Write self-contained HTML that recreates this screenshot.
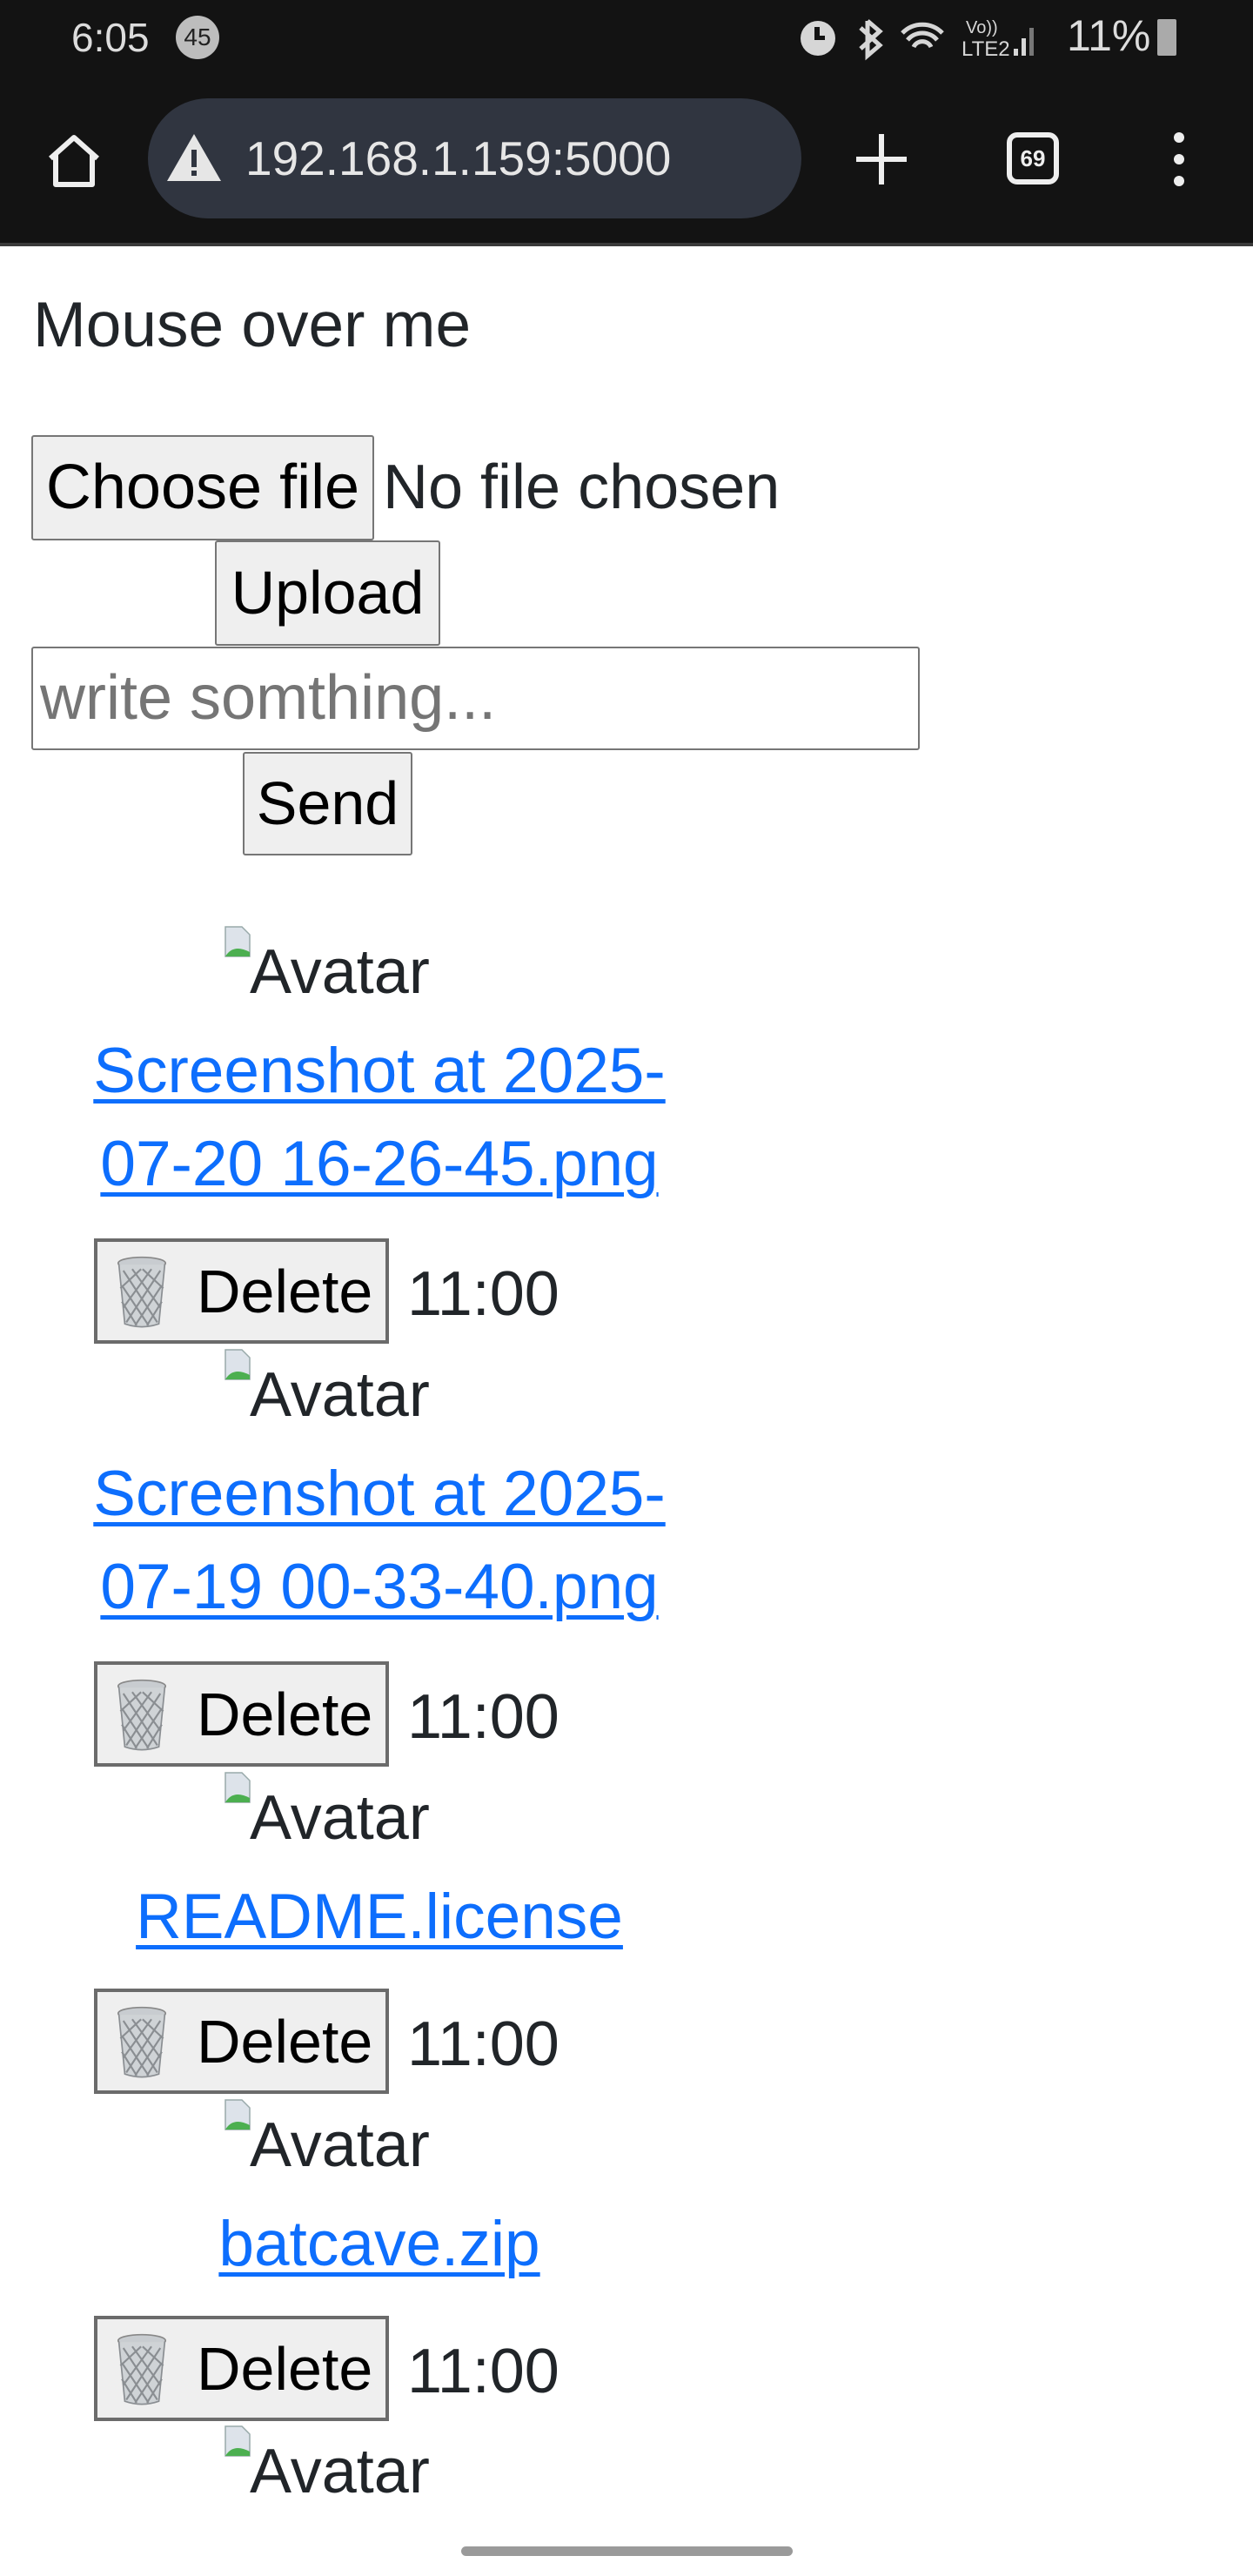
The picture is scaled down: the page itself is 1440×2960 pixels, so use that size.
<!DOCTYPE html>
<html><head><meta charset="utf-8"><style>
*{margin:0;padding:0;box-sizing:border-box}
body{width:1440px;height:2960px;background:#fff;position:relative;overflow:hidden;font-family:"Liberation Sans",sans-serif;color:#212529}
.a{position:absolute;white-space:nowrap}
.t{font-size:72px;line-height:107px}
.btn{position:absolute;background:#efefef;border:2px solid #767676;border-radius:3px;font-size:70px;color:#000;text-align:center}
.lnk{color:#0d6efd;text-decoration:underline;text-decoration-thickness:5px;text-underline-offset:8px;font-size:73px;line-height:107px;text-align:center;width:720px;left:76px}
.del{position:absolute;left:108px;width:339px;height:121px;background:#efefef;border:4px solid #6b6b6b}
.del span{position:absolute;left:114px;top:12px;font-size:70px;line-height:90px;color:#000}
.del svg{position:absolute;left:16px;top:16px}
</style></head><body>
<div class="a" style="left:0;top:0;width:1440px;height:279px;background:#131313"></div>
<div class="a" style="left:0;top:279px;width:1440px;height:4px;background:#3a3a3a"></div>
<div class="a" style="left:82px;top:16px;font-size:46px;color:#dcdcdc">6:05</div>
<div class="a" style="left:202px;top:18px;width:50px;height:50px;border-radius:25px;background:#bdbdbd;color:#222;font-size:28px;line-height:50px;text-align:center">45</div>
<svg class="a" style="left:905px;top:14px" width="310" height="60" viewBox="0 0 310 60" fill="#d6d6d6"><circle cx="35" cy="30" r="20"/><rect x="31" y="17" width="6" height="15" fill="#131313"/><rect x="31" y="27" width="12" height="5" fill="#131313"/><path d="M92 10 L106 22 L92 34 M92 10 V50 L106 38 L84 18 M84 42 L106 22" stroke="#d6d6d6" stroke-width="5" fill="none"/><path d="M132 24 a32 32 0 0 1 46 0 M138 32 a22 22 0 0 1 34 0 M145 40 a11 11 0 0 1 20 0" stroke="#d6d6d6" stroke-width="5" fill="none"/><text x="205" y="24" font-size="20" font-family="Liberation Sans">Vo))</text><text x="200" y="50" font-size="24" font-family="Liberation Sans">LTE2</text><rect x="260" y="42" width="5" height="8"/><rect x="269" y="30" width="5" height="20"/><rect x="278" y="18" width="5" height="32" fill="#777"/></svg>
<div class="a" style="left:1226px;top:12px;font-size:50px;color:#dcdcdc">11%</div>
<div class="a" style="left:1330px;top:22px;width:22px;height:42px;background:#aaa;border-radius:2px"></div>
<svg class="a" style="left:50px;top:150px" width="70" height="70" viewBox="0 0 70 70"><path d="M8 32 L35 8 L62 32 M14 27 V62 H56 V27" stroke="#eee" stroke-width="6" fill="none" stroke-linejoin="round"/></svg>
<div class="a" style="left:170px;top:113px;width:751px;height:138px;border-radius:69px;background:#303540"></div>
<svg class="a" style="left:190px;top:152px" width="66" height="58" viewBox="0 0 66 58"><path d="M33 2 L64 56 H2 Z" fill="#e6e6e6"/><rect x="30" y="20" width="6" height="20" fill="#303540"/><rect x="30" y="44" width="6" height="6" fill="#303540"/></svg>
<div class="a" style="left:282px;top:150px;font-size:55px;color:#e6e6e6">192.168.1.159:5000</div>
<svg class="a" style="left:980px;top:150px" width="66" height="66"><path d="M33 4 V62 M4 33 H62" stroke="#eee" stroke-width="6"/></svg>
<div class="a" style="left:1157px;top:152px;width:60px;height:60px;border:6px solid #eee;border-radius:12px;color:#eee;font-size:26px;font-weight:bold;text-align:center;line-height:48px">69</div>
<svg class="a" style="left:1340px;top:150px" width="30" height="66"><circle cx="15" cy="8" r="6" fill="#eee"/><circle cx="15" cy="33" r="6" fill="#eee"/><circle cx="15" cy="58" r="6" fill="#eee"/></svg>

<div class="a t" style="left:38px;top:320px;font-size:73px">Mouse over me</div>
<div class="btn" style="left:36px;top:500px;width:394px;height:121px;line-height:117px;font-size:72px">Choose file</div>
<div class="a" style="left:440px;top:510px;font-size:72px;line-height:100px">No file chosen</div>
<div class="btn" style="left:247px;top:621px;width:259px;height:121px;line-height:117px">Upload</div>
<div class="a" style="left:36px;top:743px;width:1021px;height:119px;border:2px solid #767676;border-radius:3px;font-size:72px;color:#757575;line-height:115px;padding-left:8px">write somthing...</div>
<div class="btn" style="left:279px;top:864px;width:195px;height:119px;line-height:115px">Send</div>

<svg width="0" height="0" style="position:absolute"><defs>
<symbol id="bi" viewBox="0 0 30 36"><path d="M1 1 H20 L29 10 V35 H1 Z" fill="#dde3ea" stroke="#9aa" stroke-width="1.5"/><path d="M1 35 Q10 20 29 30 V35 Z" fill="#4caf50"/></symbol>
<symbol id="tr" viewBox="0 0 70 100"><ellipse cx="35" cy="10" rx="32" ry="8" fill="#c8ccd0" stroke="#888" stroke-width="2"/><path d="M4 12 L12 92 Q35 100 58 92 L66 12" fill="#cfd3d6" stroke="#8a8e92" stroke-width="2"/><path d="M10 20 L56 90 M22 18 L60 70 M36 18 L64 44 M8 40 L44 94 M8 62 L28 94 M60 20 L14 90 M48 18 L10 70 M34 18 L6 44 M62 40 L26 94 M62 62 L42 94" stroke="#8a8e92" stroke-width="2.5"/></symbol>
</defs></svg>

<svg class="a" style="left:258px;top:1064px" width="30" height="36"><use href="#bi"/></svg>
<div class="a t" style="left:287px;top:1064px">Avatar</div>
<div class="a lnk" style="top:1177px">Screenshot at 2025-<br>07-20 16-26-45.png</div>
<div class="del" style="top:1423px"><svg width="70" height="85" viewBox="0 0 70 100"><use href="#tr"/></svg><span>Delete</span></div>
<div class="a t" style="left:468px;top:1434px">11:00</div>

<svg class="a" style="left:258px;top:1550px" width="30" height="36"><use href="#bi"/></svg>
<div class="a t" style="left:287px;top:1550px">Avatar</div>
<div class="a lnk" style="top:1663px">Screenshot at 2025-<br>07-19 00-33-40.png</div>
<div class="del" style="top:1909px"><svg width="70" height="85" viewBox="0 0 70 100"><use href="#tr"/></svg><span>Delete</span></div>
<div class="a t" style="left:468px;top:1920px">11:00</div>

<svg class="a" style="left:258px;top:2036px" width="30" height="36"><use href="#bi"/></svg>
<div class="a t" style="left:287px;top:2036px">Avatar</div>
<div class="a lnk" style="top:2149px">README.license</div>
<div class="del" style="top:2285px"><svg width="70" height="85" viewBox="0 0 70 100"><use href="#tr"/></svg><span>Delete</span></div>
<div class="a t" style="left:468px;top:2296px">11:00</div>

<svg class="a" style="left:258px;top:2412px" width="30" height="36"><use href="#bi"/></svg>
<div class="a t" style="left:287px;top:2412px">Avatar</div>
<div class="a lnk" style="top:2525px">batcave.zip</div>
<div class="del" style="top:2661px"><svg width="70" height="85" viewBox="0 0 70 100"><use href="#tr"/></svg><span>Delete</span></div>
<div class="a t" style="left:468px;top:2672px">11:00</div>

<svg class="a" style="left:258px;top:2787px" width="30" height="36"><use href="#bi"/></svg>
<div class="a t" style="left:287px;top:2787px">Avatar</div>

<div class="a" style="left:530px;top:2926px;width:381px;height:11px;border-radius:6px;background:#9a9a9a"></div>
</body></html>
